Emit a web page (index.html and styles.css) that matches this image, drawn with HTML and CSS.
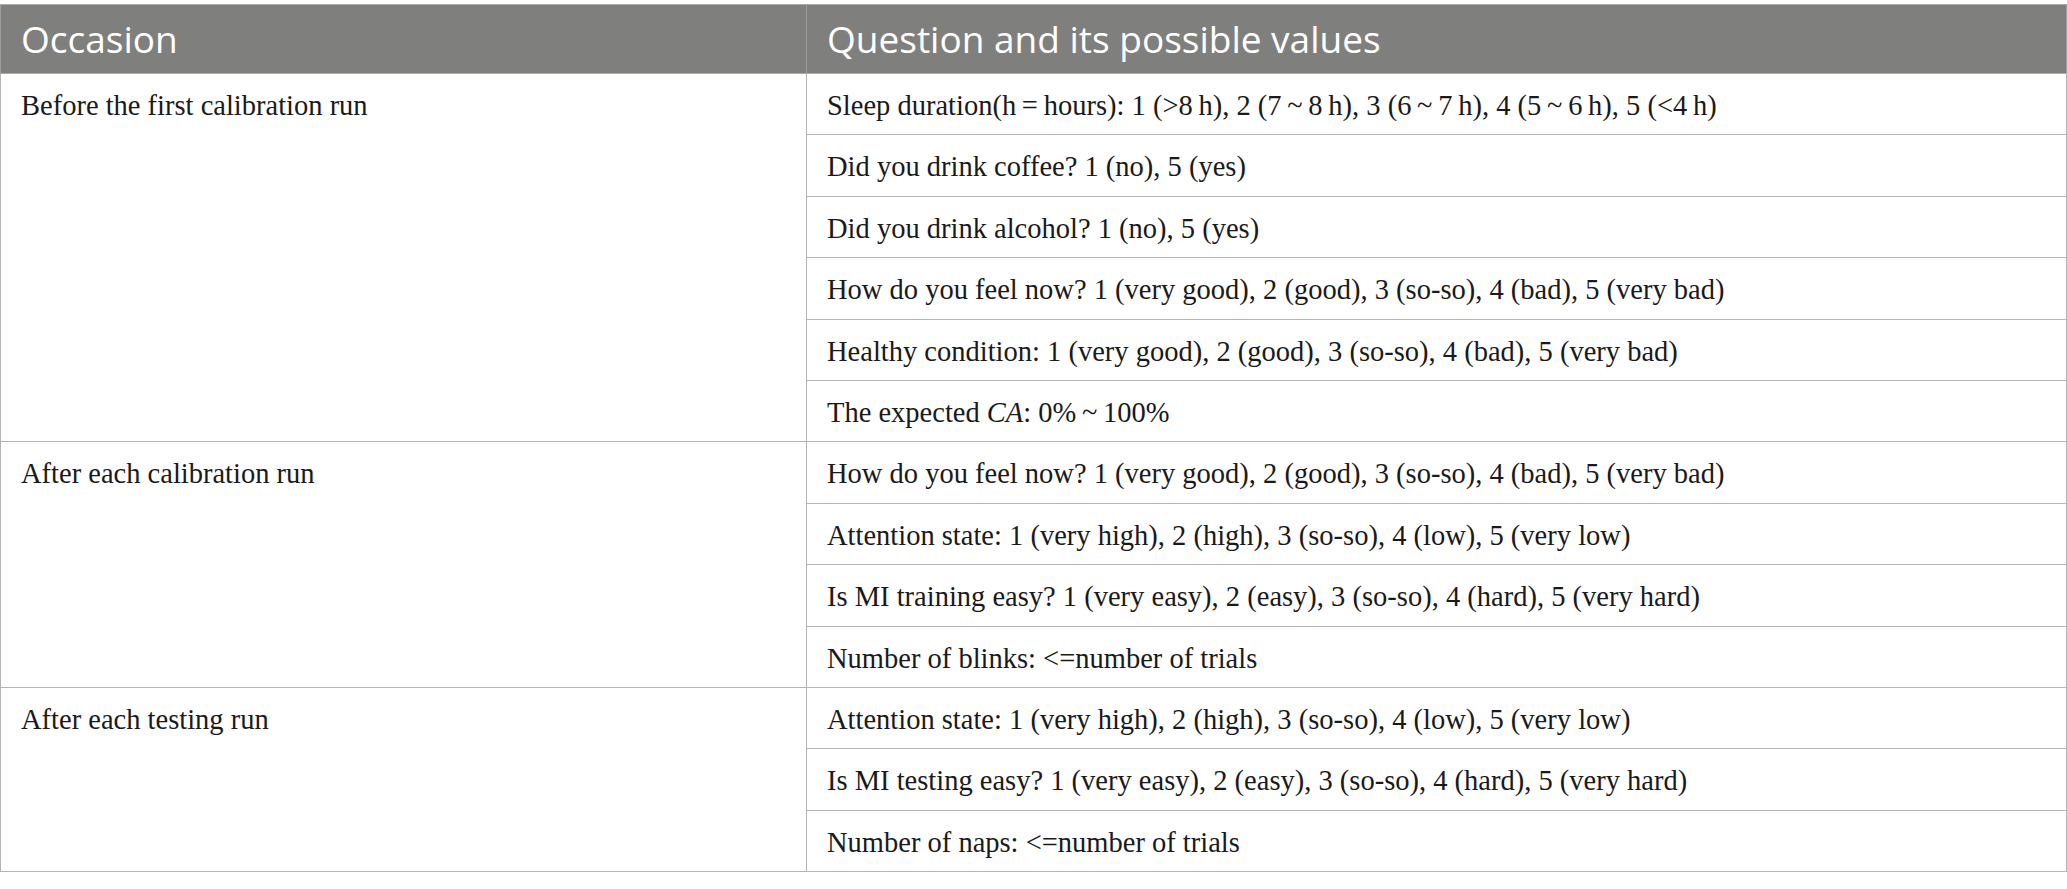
FILE: index.html
```html
<!DOCTYPE html>
<html>
<head>
<meta charset="utf-8">
<link rel="stylesheet" href="styles.css">
</head>
<body>
<table class="qtable">
  <colgroup><col class="c1"><col class="c2"></colgroup>
  <thead>
    <tr><th>Occasion</th><th>Question and its possible values</th></tr>
  </thead>
  <tbody>
    <tr><td rowspan="6">Before the first calibration run</td><td>Sleep duration(h&#8201;=&#8201;hours): 1 (&gt;8&#8201;h), 2 (7&#8201;~&#8201;8&#8201;h), 3 (6&#8201;~&#8201;7&#8201;h), 4 (5&#8201;~&#8201;6&#8201;h), 5 (&lt;4&#8201;h)</td></tr>
    <tr><td>Did you drink coffee? 1 (no), 5 (yes)</td></tr>
    <tr><td>Did you drink alcohol? 1 (no), 5 (yes)</td></tr>
    <tr><td>How do you feel now? 1 (very good), 2 (good), 3 (so-so), 4 (bad), 5 (very bad)</td></tr>
    <tr><td>Healthy condition: 1 (very good), 2 (good), 3 (so-so), 4 (bad), 5 (very bad)</td></tr>
    <tr><td>The expected <i>CA</i>: 0%&#8201;~&#8201;100%</td></tr>
    <tr><td rowspan="4">After each calibration run</td><td>How do you feel now? 1 (very good), 2 (good), 3 (so-so), 4 (bad), 5 (very bad)</td></tr>
    <tr><td>Attention state: 1 (very high), 2 (high), 3 (so-so), 4 (low), 5 (very low)</td></tr>
    <tr><td>Is MI training easy? 1 (very easy), 2 (easy), 3 (so-so), 4 (hard), 5 (very hard)</td></tr>
    <tr><td>Number of blinks: &lt;=number of trials</td></tr>
    <tr><td rowspan="3">After each testing run</td><td>Attention state: 1 (very high), 2 (high), 3 (so-so), 4 (low), 5 (very low)</td></tr>
    <tr><td>Is MI testing easy? 1 (very easy), 2 (easy), 3 (so-so), 4 (hard), 5 (very hard)</td></tr>
    <tr><td>Number of naps: &lt;=number of trials</td></tr>
  </tbody>
</table>
</body>
</html>
```

FILE: styles.css
```css
html, body {
  margin: 0;
  padding: 0;
  background: #ffffff;
}
body {
  padding-top: 4px;
}
.qtable {
  border-collapse: collapse;
  width: 2066px;
  table-layout: fixed;
  border: 1px solid #ababab;
}
.c1 { width: 806px; }
.c2 { width: 1260px; }
.qtable th {
  background: #7f807e;
  color: #ffffff;
  font-family: "Open Sans", sans-serif;
  font-weight: 400;
  font-size: 37px;
  text-align: left;
  height: 69px;
  padding: 0 20px;
  line-height: 42px;
  box-sizing: border-box;
  border: 1px solid #9c9c9c;
  border-top-color: #ababab;
  border-bottom-color: #ababab;
}
.qtable td {
  font-family: "Liberation Serif", "Times New Roman", serif;
  font-size: 28.5px;
  color: #1a1a1a;
  line-height: 32px;
  vertical-align: top;
  height: 61.4px;
  padding: 16px 20px 0 20px;
  box-sizing: border-box;
  border: 1px solid #b5b5b5;
  white-space: nowrap;
}
```
